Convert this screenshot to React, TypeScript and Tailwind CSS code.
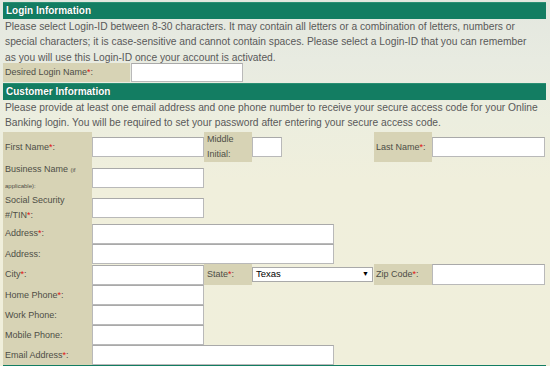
import React from "react";

const font = { fontFamily: '"Liberation Sans", Arial, sans-serif' };

function Req() {
  return <span className="text-[#e01010]">*</span>;
}

function Label({ children, className = "" }: { children: React.ReactNode; className?: string }) {
  return (
    <div className={`bg-[#d7d3b5] text-[9px] leading-[15px] text-[#4e4e46] pl-[2px] flex items-center ${className}`}>
      <div>{children}</div>
    </div>
  );
}

function Input({ className = "" }: { className?: string }) {
  return <div className={`bg-white border border-[#b9b9b9] border-t-[#a9a9a9] ${className}`} />;
}

function Header({ children }: { children: React.ReactNode }) {
  return (
    <div className="h-[17px] bg-[#137d62] border-t border-[#2a8f73] text-white font-bold text-[10px] leading-[16px] pl-[3px] [text-shadow:0_0_1px_rgba(0,0,0,0.4)]">
      {children}
    </div>
  );
}

const grid = "grid grid-cols-[89px_112px_48px_122px_58px_114px]";

export default function App() {
  return (
    <div
      style={font}
      className="w-[550px] h-[366px] overflow-hidden bg-[linear-gradient(180deg,#e3e7df_0px,#e8ebe1_60px,#eceedf_120px,#f0efdc_180px,#f0efdb_366px)]"
    >
      <div className="pt-[2px] pl-[3px] pr-[4px]">
        <Header>Login Information</Header>
        <p className="text-[10.25px] leading-[15.3px] text-[#595959] pl-[2px] h-[44px] whitespace-nowrap">
          Please select Login-ID between 8-30 characters. It may contain all letters or a combination of letters, numbers or
          <br />
          special characters; it is case-sensitive and cannot contain spaces. Please select a Login-ID that you can remember
          <br />
          as you will use this Login-ID once your account is activated.
        </p>
        <div className="flex h-[19px]">
          <Label className="w-[127px]">
            Desired Login Name<Req />:
          </Label>
          <Input className="ml-[1px] w-[112px] h-[19px]" />
        </div>
        <div className="mt-[1px]">
          <Header>Customer Information</Header>
        </div>
        <p className="text-[10.25px] leading-[15.3px] text-[#595959] pl-[2px] h-[32px] whitespace-nowrap">
          Please provide at least one email address and one phone number to receive your secure access code for your Online
          <br />
          Banking login. You will be required to set your password after entering your secure access code.
        </p>

        {/* Row 1 */}
        <div className={`${grid} h-[30px]`}>
          <Label>
            First Name<Req />:
          </Label>
          <div className="flex items-center">
            <Input className="w-[112px] h-[20px]" />
          </div>
          <Label className="pl-[3px] leading-[13px]">
            Middle
            <br />
            Initial:
          </Label>
          <div className="flex items-center">
            <Input className="w-[30px] h-[20px]" />
          </div>
          <Label className="pl-[2px]">
            Last Name<Req />:
          </Label>
          <div className="flex items-center">
            <Input className="w-[113px] h-[20px]" />
          </div>
        </div>

        {/* Row 2 */}
        <div className={`${grid} h-[31px]`}>
          <Label className="leading-[14px]">
            Business Name <span className="text-[6px]">(if</span>
            <br />
            <span className="text-[6px]">applicable):</span>
          </Label>
          <div className="flex items-center">
            <Input className="w-[112px] h-[20px]" />
          </div>
        </div>

        {/* Row 3 */}
        <div className={`${grid} h-[30px]`}>
          <Label className="leading-[14px]">
            Social Security
            <br />
            #/TIN<Req />:
          </Label>
          <div className="flex items-center">
            <Input className="w-[112px] h-[20px]" />
          </div>
        </div>

        {/* Address */}
        <div className={`${grid} h-[21px]`}>
          <Label>
            Address<Req />:
          </Label>
          <div className="col-span-3 flex items-end">
            <Input className="w-[242px] h-[20px]" />
          </div>
        </div>
        <div className={`${grid} h-[20px]`}>
          <Label>Address:</Label>
          <div className="col-span-3 flex items-end">
            <Input className="w-[242px] h-[20px]" />
          </div>
        </div>

        {/* City / State / Zip */}
        <div className={`${grid} h-[21px]`}>
          <Label>
            City<Req />:
          </Label>
          <div className="flex items-end">
            <Input className="w-[112px] h-[20px]" />
          </div>
          <Label className="pl-[3px]">
            State<Req />:
          </Label>
          <div className="flex items-center">
            <div className="w-[121px] h-[15px] bg-white border border-[#a9a9a9] flex items-center justify-between pl-[3px] pr-[3px] text-[9.5px] text-black">
              <span>Texas</span>
              <span className="text-[7px]">▼</span>
            </div>
          </div>
          <Label className="pl-[2px]">
            Zip Code<Req />:
          </Label>
          <div className="flex items-end">
            <Input className="w-[113px] h-[21px]" />
          </div>
        </div>

        {/* Phones */}
        <div className={`${grid} h-[20px]`}>
          <Label>
            Home Phone<Req />:
          </Label>
          <div className="flex items-end">
            <Input className="w-[112px] h-[20px]" />
          </div>
        </div>
        <div className={`${grid} h-[20px]`}>
          <Label>Work Phone:</Label>
          <div className="flex items-end">
            <Input className="w-[112px] h-[20px]" />
          </div>
        </div>
        <div className={`${grid} h-[20px]`}>
          <Label>Mobile Phone:</Label>
          <div className="flex items-end">
            <Input className="w-[112px] h-[20px]" />
          </div>
        </div>
        <div className={`${grid} h-[20px]`}>
          <Label>
            Email Address<Req />:
          </Label>
          <div className="col-span-3 flex items-end">
            <Input className="w-[242px] h-[20px]" />
          </div>
        </div>
        <div className="h-[3px] bg-[#137d62]" />
      </div>
    </div>
  );
}
